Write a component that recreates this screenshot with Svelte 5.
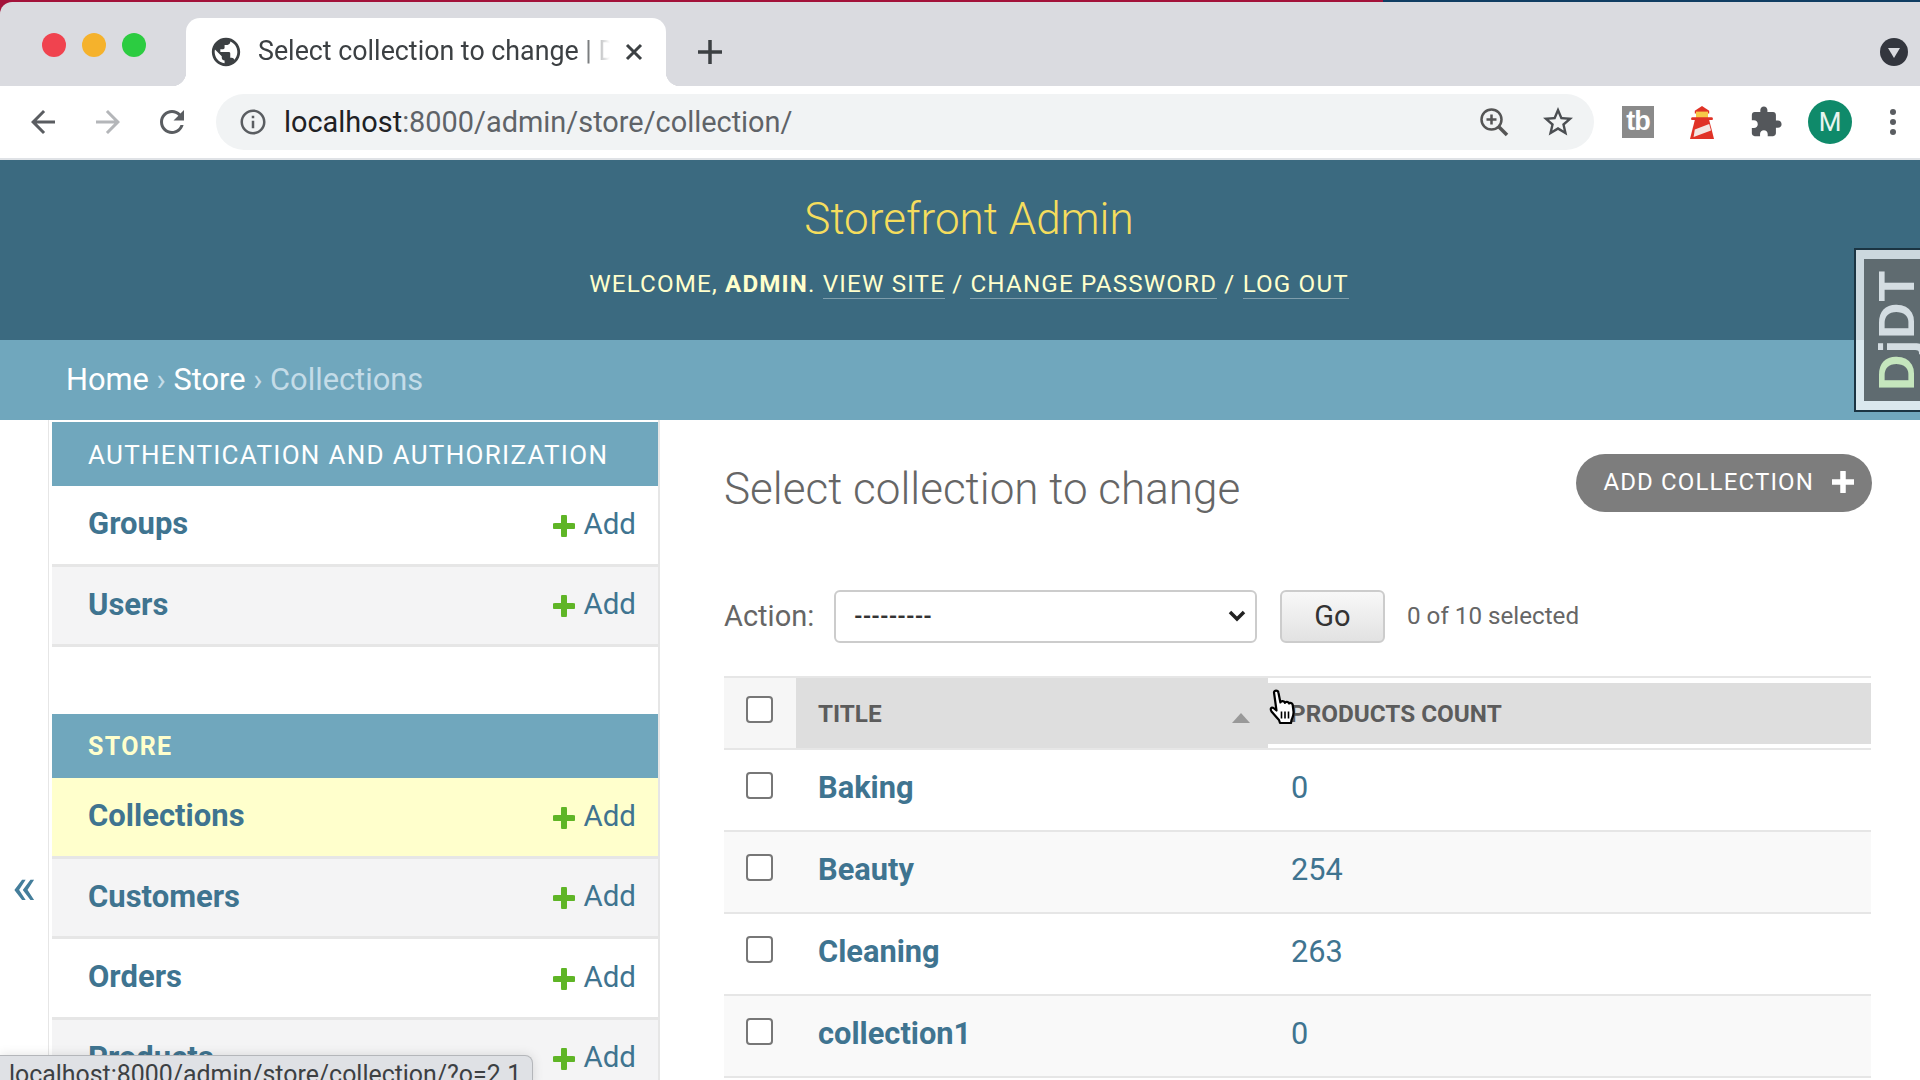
<script>
  const authModels = [
    { name: 'Groups', alt: false },
    { name: 'Users', alt: true }
  ]
  const storeModels = [
    { name: 'Collections', current: true },
    { name: 'Customers', alt: true },
    { name: 'Orders', alt: false },
    { name: 'Products', alt: true }
  ]
  const rows = [
    { title: 'Baking', count: 0 },
    { title: 'Beauty', count: 254 },
    { title: 'Cleaning', count: 263 },
    { title: 'collection1', count: 0 }
  ]
</script>

<div class="screen">
  <div class="window-edge"></div>
  <div class="tabstrip">
    <div class="lights">
      <span class="light red"></span>
      <span class="light amber"></span>
      <span class="light green"></span>
    </div>
    <div class="tab">
      <svg class="globe" viewBox="0 0 24 24"><path d="M12 2C6.48 2 2 6.48 2 12s4.48 10 10 10 10-4.48 10-10S17.52 2 12 2zm-1 17.93c-3.95-.49-7-3.85-7-7.93 0-.62.08-1.21.21-1.79L9 15v1c0 1.1.9 2 2 2v1.93zm6.9-2.54c-.26-.81-1-1.39-1.9-1.39h-1v-3c0-.55-.45-1-1-1H8v-2h2c.55 0 1-.45 1-1V7h2c1.1 0 2-.9 2-2v-.41c2.93 1.19 5 4.06 5 7.41 0 2.08-.8 3.97-2.1 5.39z"/></svg>
      <span class="tab-title">Select collection to change | Django site admin</span>
      <svg class="tab-close" viewBox="0 0 20 20"><path d="M3 3l14 14M17 3L3 17"/></svg>
    </div>
    <svg class="new-tab" viewBox="0 0 26 26"><path d="M13 1v24M1 13h24"/></svg>
    <span class="strip-gap"></span>
    <span class="tab-search"><svg viewBox="0 0 14 12"><path d="M1 1h12L7 11z"/></svg></span>
  </div>

  <div class="toolbar">
    <svg class="tool back" viewBox="0 0 24 24"><path d="M20 11H7.830l5.590-5.590L12 4l-8 8 8 8 1.410-1.410L7.830 13H20v-2z"/></svg>
    <svg class="tool forward" viewBox="0 0 24 24"><path d="M4 11h12.170l-5.590-5.590L12 4l8 8-8 8-1.410-1.410L16.170 13H4v-2z"/></svg>
    <svg class="tool reload" viewBox="0 0 24 24"><path d="M17.65 6.35C16.2 4.9 14.21 4 12 4c-4.42 0-7.99 3.58-7.99 8s3.57 8 7.99 8c3.73 0 6.84-2.55 7.73-6h-2.08c-.82 2.33-3.04 4-5.65 4-3.31 0-6-2.69-6-6s2.69-6 6-6c1.66 0 3.14.69 4.22 1.78L13 11h7V4l-2.35 2.35z"/></svg>
    <div class="omnibox">
      <svg class="info" viewBox="0 0 24 24"><path d="M11 7h2v2h-2zm0 4h2v6h-2zm1-9C6.48 2 2 6.48 2 12s4.48 10 10 10 10-4.48 10-10S17.52 2 12 2zm0 18c-4.41 0-8-3.59-8-8s3.59-8 8-8 8 3.59 8 8-3.59 8-8 8z"/></svg>
      <span class="url"><b>localhost</b>:8000/admin/store/collection/</span>
      <svg class="lens" viewBox="0 0 30 30"><circle cx="12.5" cy="12.5" r="10"/><path d="M12.5 7.5v10M7.5 12.5h10"/><path class="lens-handle" d="M20 20l8 8"/></svg>
      <svg class="star" viewBox="0 0 24 24"><path d="M22 9.24l-7.19-.62L12 2 9.19 8.63 2 9.24l5.46 4.73L5.82 21 12 17.27 18.18 21l-1.63-7.03L22 9.24zM12 15.4l-3.76 2.27 1-4.28-3.32-2.88 4.38-.38L12 6.1l1.71 4.04 4.38.38-3.32 2.88 1 4.28L12 15.4z"/></svg>
    </div>
    <span class="ext-tb">tb</span>
    <svg class="ext-lighthouse" viewBox="2 0 20 36" preserveAspectRatio="none">
      <path fill="#e03226" d="M12 1l6 5v3H6V6z"/>
      <rect x="7" y="7" width="10" height="8" fill="#f7c948"/>
      <rect x="3" y="13" width="18" height="3" rx="1" fill="#e03226"/>
      <path fill="#e03226" d="M6 16h12l4 20H2z"/>
      <path fill="#f3e6e2" d="M6 26l12-6 1.500 7L5 34z"/>
    </svg>
    <svg class="puzzle" viewBox="0 0 24 24"><path d="M20.5 11H19V7c0-1.1-.9-2-2-2h-4V3.5C13 2.12 11.88 1 10.5 1S8 2.12 8 3.5V5H4c-1.1 0-1.99.9-1.99 2v3.8H3.5c1.49 0 2.7 1.21 2.7 2.7s-1.21 2.7-2.7 2.7H2V20c0 1.1.9 2 2 2h3.8v-1.5c0-1.49 1.21-2.7 2.7-2.7 1.49 0 2.7 1.21 2.7 2.7V22H17c1.1 0 2-.9 2-2v-4h1.5c1.38 0 2.5-1.12 2.5-2.5S21.88 11 20.5 11z"/></svg>
    <span class="avatar">M</span>
    <span class="dots"><i></i><i></i><i></i></span>
  </div>

  <header class="site-header">
    <div class="branding">Storefront Admin</div>
    <div class="user-tools">
      Welcome, <strong>admin</strong>.
      <a href="#site">View site</a> /
      <a href="#password">Change password</a> /
      <a href="#logout">Log out</a>
    </div>
  </header>

  <nav class="breadcrumbs">
    <a href="#home">Home</a> <span class="sep">›</span> <a href="#store">Store</a> <span class="sep">›</span> <span class="crumb-current">Collections</span>
  </nav>

  <div class="body-row">
    <div class="nav-toggle">«</div>
    <aside class="sidebar">
      <div class="caption">Authentication and Authorization</div>
      {#each authModels as model}
        <div class="model" class:alt={model.alt}>
          <a class="model-name" href="#model">{model.name}</a>
          <a class="add-link" href="#add">
            <svg viewBox="0 0 22 22"><path d="M11 2v18M2 11h18"/></svg>
            Add
          </a>
        </div>
      {/each}
      <div class="caption store">Store</div>
      {#each storeModels as model}
        <div class="model" class:alt={model.alt} class:current={model.current}>
          <a class="model-name" href="#model">{model.name}</a>
          <a class="add-link" href="#add">
            <svg viewBox="0 0 22 22"><path d="M11 2v18M2 11h18"/></svg>
            Add
          </a>
        </div>
      {/each}
    </aside>

    <main class="content">
      <div class="title-row">
        <h1>Select collection to change</h1>
        <a class="add-button" href="#add">
          Add collection
          <svg viewBox="0 0 22 22"><path d="M11 1v20M1 11h20"/></svg>
        </a>
      </div>

      <div class="actions">
        <span class="action-label">Action:</span>
        <select class="action-select"><option>---------</option></select>
        <button class="go">Go</button>
        <span class="counter">0 of 10 selected</span>
      </div>

      <table class="results">
        <thead>
          <tr>
            <th class="check-col"><input type="checkbox" /></th>
            <th class="title-col">Title<span class="sort-up"></span></th>
            <th class="count-col"><span class="count-band">Products count</span></th>
          </tr>
        </thead>
        <tbody>
          {#each rows as row, i}
            <tr class:odd={i % 2 === 1}>
              <td class="check-col"><input type="checkbox" /></td>
              <td class="title-cell"><a href="#row">{row.title}</a></td>
              <td class="count-cell"><a href="#count">{row.count}</a></td>
            </tr>
          {/each}
        </tbody>
      </table>
    </main>
  </div>

  <div class="djdt"><div class="djdt-inner"><span class="djdt-text"><em>D</em>jDT</span></div></div>

  <svg class="hand" viewBox="0 0 30 36">
    <path d="M6 3.500c0-2.500 4-2.500 4.400 0l2 10c.5-2 4-2 4.500.4.6-1.600 3.700-1.400 4.200.6.900-1 3.400-.5 3.600 1.500l.8 6.500c.4 4-1 6-2 8.500l-.5 3H12l-1-3c-2-2-4-4.500-7.500-8.500C2 20 3 17.500 5.500 19l3 2.500z"/>
    <path class="hand-lines" d="M13.500 22.500v7M17 22.500v7M20.500 22.500v7"/>
  </svg>

  <div class="status-bubble">localhost:8000/admin/store/collection/?o=2.1</div>
</div>

<style>
  :global(body) {
    margin: 0;
    background: #fff;
  }

  .screen {
    position: relative;
    width: 1920px;
    height: 1080px;
    overflow: hidden;
    background: #fff;
    font-family: Roboto, "Liberation Sans", sans-serif;
    color: #666;
  }

  /* browser chrome */
  .window-edge {
    position: absolute;
    top: 0;
    left: 0;
    width: 100%;
    height: 14px;
    background: linear-gradient(90deg, #a3123a 0, #a3123a 1383px, #0f3d63 1383px);
  }
  .tabstrip {
    position: relative;
    display: flex;
    align-items: flex-start;
    height: 84px;
    margin-top: 2px;
    background: #dadbe0;
    border-top-left-radius: 12px;
  }
  .lights {
    display: flex;
    gap: 16px;
    width: 186px;
    box-sizing: border-box;
    padding: 31px 0 0 42px;
  }
  .light {
    width: 24px;
    height: 24px;
    border-radius: 50%;
  }
  .red { background: #f0434f; }
  .amber { background: #f5b22c; }
  .green { background: #2ccc41; }

  .tab {
    position: relative;
    display: flex;
    align-items: center;
    width: 480px;
    height: 68px;
    margin-top: 16px;
    box-sizing: border-box;
    padding: 0 22px 0 26px;
    background: #fff;
    border-radius: 14px 14px 0 0;
  }
  .tab::before,
  .tab::after {
    content: '';
    position: absolute;
    bottom: 0;
    width: 14px;
    height: 14px;
  }
  .tab::before {
    left: -14px;
    background: radial-gradient(circle at 0 0, #dadbe0 14px, #fff 14.5px);
  }
  .tab::after {
    right: -14px;
    background: radial-gradient(circle at 100% 0, #dadbe0 14px, #fff 14.5px);
  }
  .globe {
    flex: none;
    width: 34px;
    height: 34px;
    margin-left: -3px;
    fill: #3c4043;
  }
  .tab-title {
    flex: 1;
    margin: -2px 0 0 15px;
    overflow: hidden;
    white-space: nowrap;
    font-size: 26.800px;
    color: #3c4043;
    -webkit-mask-image: linear-gradient(90deg, #000 91%, transparent 100%);
    mask-image: linear-gradient(90deg, #000 91%, transparent 100%);
  }
  .tab-close {
    flex: none;
    width: 20px;
    height: 20px;
    margin-left: 14px;
    fill: none;
    stroke: #3c4043;
    stroke-width: 3;
  }
  .new-tab {
    width: 26px;
    height: 26px;
    margin: 37px 0 0 31px;
    fill: none;
    stroke: #3c4043;
    stroke-width: 3.500;
  }
  .strip-gap { flex: 1; }
  .tab-search {
    display: flex;
    align-items: center;
    justify-content: center;
    width: 28px;
    height: 28px;
    margin: 36px 12px 0 0;
    border-radius: 50%;
    background: #33363e;
  }
  .tab-search svg {
    width: 14px;
    height: 12px;
    margin-top: 2px;
    fill: #dadbe0;
  }

  .toolbar {
    position: relative;
    display: flex;
    align-items: center;
    height: 72px;
    box-sizing: border-box;
    background: #fff;
  }
  .tool {
    flex: none;
    width: 36px;
    height: 36px;
    fill: #5a5d61;
  }
  .back { margin-left: 25px; }
  .forward { margin-left: 29px; fill: #b4b6b9; }
  .reload { margin-left: 28px; }
  .omnibox {
    display: flex;
    align-items: center;
    width: 1378px;
    height: 56px;
    margin-left: 26px;
    box-sizing: border-box;
    padding: 0 18px 0 22px;
    border-radius: 28px;
    background: #f1f3f4;
  }
  .info {
    flex: none;
    width: 30px;
    height: 30px;
    fill: #5a5d61;
  }
  .url {
    flex: 1;
    margin-left: 16px;
    font-size: 28.900px;
    color: #5f6368;
  }
  .url b {
    font-weight: 400;
    color: #202124;
  }
  .lens {
    flex: none;
    width: 30px;
    height: 30px;
    fill: none;
    stroke: #555;
    stroke-width: 2.500;
  }
  .lens-handle { stroke-width: 3.500; }
  .star {
    flex: none;
    width: 36px;
    height: 36px;
    margin-left: 31px;
    fill: #4b4e52;
  }
  .ext-tb {
    flex: none;
    width: 32px;
    height: 32px;
    margin-left: 28px;
    background: #8a8a8a;
    color: #fff;
    font: 700 27px/30px "Liberation Sans", sans-serif;
    letter-spacing: -1px;
    text-align: center;
  }
  .ext-lighthouse {
    flex: none;
    width: 24px;
    height: 34px;
    margin-left: 36px;
  }
  .puzzle {
    flex: none;
    width: 34px;
    height: 34px;
    margin-left: 35px;
    fill: #54575b;
  }
  .avatar {
    flex: none;
    width: 44px;
    height: 44px;
    margin-left: 25px;
    border-radius: 50%;
    background: #0f8a6a;
    color: #e8f5f0;
    font-size: 26px;
    line-height: 44px;
    text-align: center;
  }
  .dots {
    display: flex;
    flex-direction: column;
    gap: 4px;
    margin-left: 38px;
  }
  .dots i {
    width: 6px;
    height: 6px;
    border-radius: 50%;
    background: #5a5d61;
  }

  /* django header */
  .site-header {
    display: flex;
    flex-direction: column;
    align-items: center;
    height: 182px;
    box-sizing: border-box;
    padding: 34px 0 0 18px;
    border-top: 2px solid #dfe2e6;
    background: #3b6a80;
  }
  .branding {
    font-size: 44px;
    font-weight: 300;
    line-height: 50px;
    color: #f5dd5d;
  }
  .user-tools {
    margin-top: 24px;
    font-size: 24.200px;
    line-height: 32px;
    letter-spacing: 1.150px;
    text-transform: uppercase;
    color: #ffc;
  }
  .user-tools strong {
    font-weight: 700;
  }
  .user-tools a {
    color: #ffc;
    text-decoration: none;
    border-bottom: 1px solid rgba(255, 255, 255, .35);
  }

  .breadcrumbs {
    height: 80px;
    box-sizing: border-box;
    padding: 0 66px;
    background: #70a7bd;
    font-size: 30.800px;
    line-height: 80px;
    color: #c4dce8;
  }
  .breadcrumbs a {
    color: #fff;
    text-decoration: none;
  }

  /* sidebar */
  .body-row {
    display: flex;
    align-items: flex-start;
  }
  .nav-toggle {
    flex: none;
    width: 48px;
    box-sizing: border-box;
    padding: 442px 0 0 12px;
    font-size: 52px;
    line-height: 50px;
    color: #447e9b;
  }
  .sidebar {
    flex: none;
    width: 612px;
    height: 660px;
    box-sizing: border-box;
    padding: 2px 0 0 3px;
    border-left: 1px solid #e6e6e6;
    border-right: 2px solid #e6e6e6;
    background: #fff;
  }
  .caption {
    height: 64px;
    box-sizing: border-box;
    padding: 1px 0 0 36px;
    background: #70a7bd;
    color: #fff;
    font-size: 26px;
    line-height: 64px;
    letter-spacing: 1.300px;
    text-transform: uppercase;
  }
  .caption.store {
    margin-top: 67px;
    color: #ffffcc;
    font-weight: 700;
    font-size: 25px;
  }
  .model {
    display: flex;
    align-items: center;
    justify-content: space-between;
    height: 80.500px;
    box-sizing: border-box;
    padding: 0 22px 2px 36px;
    border-bottom: 3px solid #e6e6e6;
    background: #fff;
  }
  .model.alt { background: #f4f4f5; }
  .model.current { background: #ffffcc; }
  .model-name {
    color: #3f7490;
    font-size: 31px;
    font-weight: 700;
    text-decoration: none;
  }
  .add-link {
    display: flex;
    align-items: center;
    gap: 8px;
    color: #3f7490;
    font-size: 29.500px;
    text-decoration: none;
  }
  .add-link svg {
    width: 22px;
    height: 22px;
    margin-top: 4px;
    fill: none;
    stroke: #5fb526;
    stroke-width: 6;
    stroke-linecap: round;
  }

  /* main column */
  .content {
    flex: 1;
    min-width: 0;
    box-sizing: border-box;
    padding: 0 48px 0 64px;
  }
  .title-row {
    display: flex;
    align-items: flex-start;
    justify-content: space-between;
    height: 169px;
    padding-top: 34px;
    box-sizing: border-box;
  }
  h1 {
    margin: 9px 0 0;
    font-size: 44px;
    font-weight: 300;
    line-height: 52px;
    color: #666;
  }
  .add-button {
    display: flex;
    align-items: center;
    gap: 18px;
    height: 58px;
    box-sizing: border-box;
    padding: 0 18px 2px 27px;
    border-radius: 29px;
    background: #7d7d7d;
    color: #fff;
    font-size: 24px;
    letter-spacing: 1.150px;
    text-transform: uppercase;
    text-decoration: none;
  }
  .add-button svg {
    width: 22px;
    height: 22px;
    fill: none;
    stroke: #fff;
    stroke-width: 5.500;
    stroke-linecap: round;
  }

  .actions {
    display: flex;
    align-items: center;
    height: 54px;
  }
  .action-label {
    width: 110px;
    font-size: 29px;
  }
  .action-select {
    appearance: none;
    width: 423px;
    height: 53px;
    box-sizing: border-box;
    padding: 0 18px;
    border: 2px solid #ccc;
    border-radius: 6px;
    background: #fff url("data:image/svg+xml,%3Csvg xmlns='http://www.w3.org/2000/svg' width='18' height='12'%3E%3Cpath d='M2 2l7 7 7-7' fill='none' stroke='%23222' stroke-width='3.500'/%3E%3C/svg%3E") no-repeat right 9px center;
    color: #333;
    font: 700 22px Roboto, sans-serif;
  }
  .go {
    width: 105px;
    height: 53px;
    margin-left: 23px;
    border: 2px solid #ccc;
    border-radius: 6px;
    background: linear-gradient(#f8f8f8, #e2e2e2);
    color: #333;
    font: 400 29px Roboto, sans-serif;
  }
  .counter {
    margin-left: 22px;
    font-size: 24.200px;
  }

  .results {
    width: 1147px;
    margin-top: 33px;
    border-collapse: collapse;
    table-layout: fixed;
  }
  th {
    height: 70px;
    padding: 0;
    background: #f6f6f6;
    border-top: 2px solid #e6e6e6;
    border-bottom: 2px solid #e6e6e6;
    color: #5c5c5c;
    font-size: 24.300px;
    font-weight: 700;
    text-align: left;
    text-transform: uppercase;
    vertical-align: middle;
  }
  .check-col {
    width: 72px;
    text-align: center;
  }
  th.check-col { vertical-align: top; }
  th.check-col input { margin: 18px 0 0 22px; }
  .title-col {
    position: relative;
    width: 472px;
    box-sizing: border-box;
    padding-left: 22px;
    background: #dedede;
  }
  .sort-up {
    position: absolute;
    right: 18px;
    top: 35px;
    border-left: 9px solid transparent;
    border-right: 9px solid transparent;
    border-bottom: 10px solid #999;
  }
  .count-col {
    background: #fff;
  }
  .count-band {
    display: block;
    height: 61px;
    padding-left: 22px;
    background: #dedede;
    line-height: 61px;
  }
  td {
    height: 82px;
    padding: 0 0 6px;
    box-sizing: border-box;
    border-bottom: 2px solid #e6e6e6;
    background: #fff;
    vertical-align: middle;
  }
  tr.odd td { background: #f9f9f9; }
  td.check-col { vertical-align: top; }
  td.check-col input { margin: 22px 0 0 22px; }
  .title-cell { padding-left: 22px; }
  .title-cell a {
    color: #3f7490;
    font-size: 30.800px;
    font-weight: 700;
    text-decoration: none;
  }
  .count-cell { padding-left: 23px; }
  .count-cell a {
    color: #3f7490;
    font-size: 30.700px;
    text-decoration: none;
  }
  input[type='checkbox'] {
    appearance: none;
    display: block;
    width: 27px;
    height: 27px;
    margin: 0 auto;
    box-sizing: border-box;
    border: 2px solid #777;
    border-radius: 4px;
    background: #fff;
  }

  /* overlays */
  .djdt {
    position: absolute;
    top: 248px;
    left: 1854px;
    width: 66px;
    height: 164px;
    box-sizing: border-box;
    padding: 9px 0 9px 8px;
    border: 2px solid #1b3442;
    border-right: 0;
    background: rgba(255, 255, 255, .74);
  }
  .djdt-inner {
    display: flex;
    align-items: center;
    justify-content: flex-end;
    height: 100%;
    padding-right: 3px;
    background: #5f6b70;
  }
  .djdt-text {
    writing-mode: vertical-rl;
    transform: rotate(180deg);
    font: 700 50px/40px "Liberation Sans", sans-serif;
    letter-spacing: 1px;
    color: #d4dde2;
  }
  .djdt-text em {
    font-style: normal;
    color: #c5e6bd;
  }
  .hand {
    position: absolute;
    top: 689px;
    left: 1268px;
    width: 30px;
    height: 36px;
    fill: #fff;
    stroke: #000;
    stroke-width: 2.200;
    stroke-linejoin: round;
  }
  .hand-lines { fill: none; stroke-width: 1.600; }
  .status-bubble {
    position: absolute;
    left: 0;
    bottom: -8px;
    width: 533px;
    height: 33px;
    box-sizing: border-box;
    padding-left: 9px;
    border: 1px solid #b4b6ba;
    border-left: 0;
    border-radius: 0 8px 0 0;
    background: #dfe1e5;
    color: #3c4043;
    font-size: 24.900px;
    line-height: 38px;
    white-space: nowrap;
    box-shadow: 0 0 12px rgba(0, 0, 0, .12);
  }
</style>
